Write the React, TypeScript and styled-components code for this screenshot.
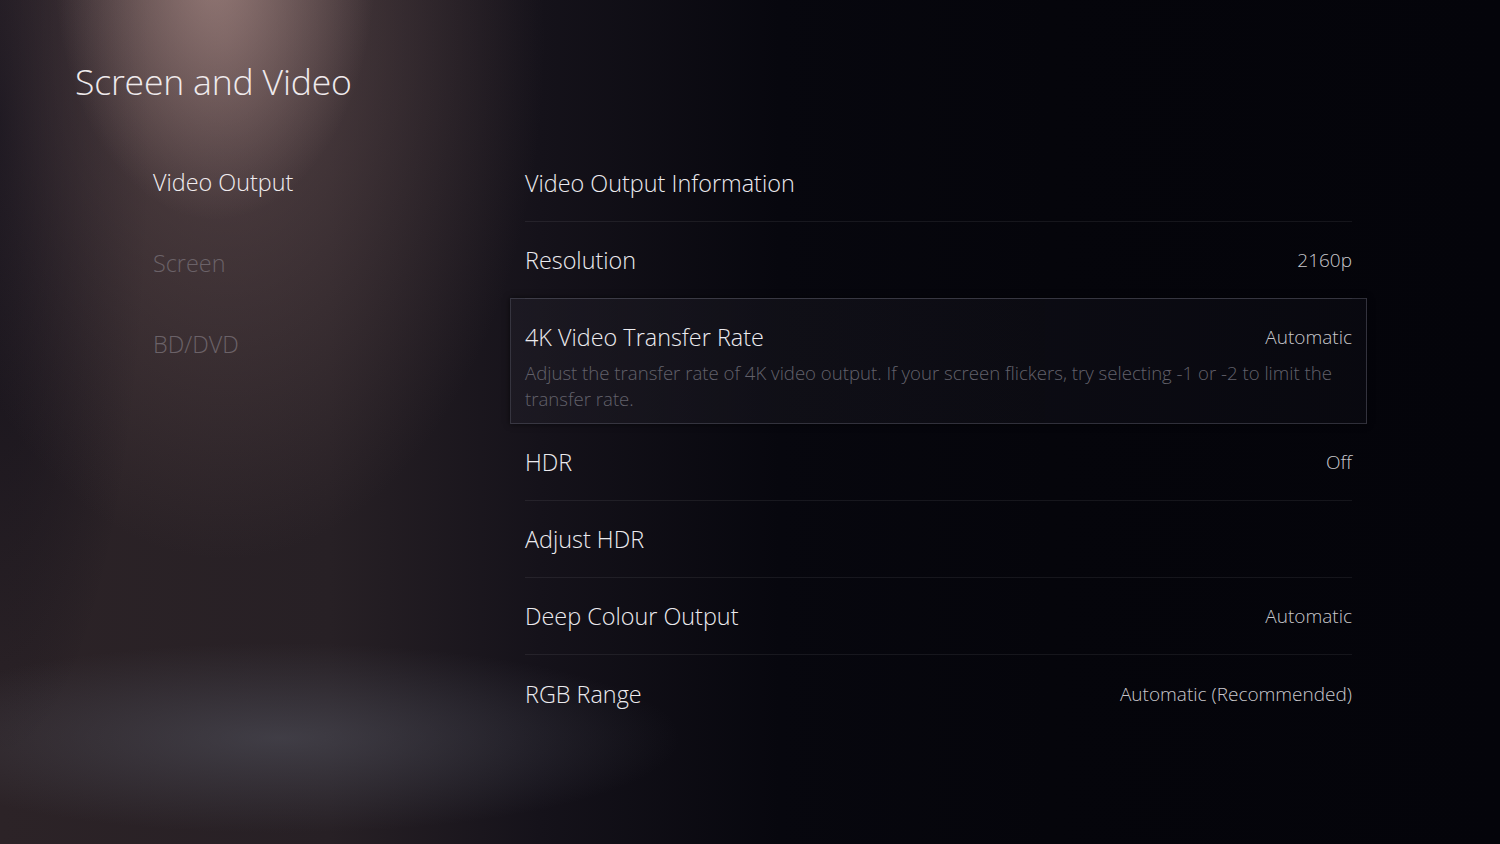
import styled, { createGlobalStyle } from "styled-components";

const GlobalStyle = createGlobalStyle`
  html, body {
    margin: 0;
    padding: 0;
    background: #05050b;
  }
  * {
    box-sizing: border-box;
  }
`;

type Setting = {
  label: string;
  value?: string;
  description?: string;
  selected?: boolean;
};

const navItems = [
  { label: "Video Output", active: true },
  { label: "Screen", active: false },
  { label: "BD/DVD", active: false },
];

const settings: Setting[] = [
  { label: "Video Output Information" },
  { label: "Resolution", value: "2160p" },
  {
    label: "4K Video Transfer Rate",
    value: "Automatic",
    description:
      "Adjust the transfer rate of 4K video output. If your screen flickers, try selecting -1 or -2 to limit the transfer rate.",
    selected: true,
  },
  { label: "HDR", value: "Off" },
  { label: "Adjust HDR" },
  { label: "Deep Colour Output", value: "Automatic" },
  { label: "RGB Range", value: "Automatic (Recommended)" },
];

function App() {
  return (
    <Page>
      <GlobalStyle />
      <Title>Screen and Video</Title>
      <Body>
        <Nav>
          {navItems.map((item) => (
            <NavItem key={item.label} $active={item.active}>
              {item.label}
            </NavItem>
          ))}
        </Nav>
        <List>
          {settings.map((s) => (
            <Row key={s.label} $selected={s.selected}>
              <RowHead>
                <Label>{s.label}</Label>
                {s.value && <Value>{s.value}</Value>}
              </RowHead>
              {s.description && <Description>{s.description}</Description>}
            </Row>
          ))}
        </List>
      </Body>
    </Page>
  );
}

export default App;

const Page = styled.div`
  position: relative;
  width: 1500px;
  height: 844px;
  overflow: hidden;
  font-family: "Open Sans", "Noto Sans", sans-serif;
  color: #ecebee;
  background:
    radial-gradient(ellipse 160px 250px at 215px -30px, rgba(200, 165, 158, 0.55), rgba(200, 165, 158, 0) 100%),
    radial-gradient(ellipse 320px 520px at 225px 40px, rgba(125, 98, 98, 0.5), rgba(125, 98, 98, 0) 100%),
    radial-gradient(ellipse 400px 95px at 280px 738px, rgba(88, 90, 102, 0.5), rgba(88, 90, 102, 0) 100%),
    radial-gradient(ellipse 150px 640px at 0px 120px, rgba(8, 8, 20, 0.75), rgba(8, 8, 20, 0) 100%),
    linear-gradient(90deg, #2c2327 0%, #272025 22%, #15121a 36%, #07070e 52%, #05050b 70%, #04040a 100%);
`;

const Title = styled.h1`
  margin: 0;
  padding: 60px 0 0 75px;
  font-size: 35.6px;
  line-height: 42px;
  font-weight: 300;
  color: #efeaec;
  letter-spacing: -0.2px;
`;

const Body = styled.div`
  display: grid;
  grid-template-columns: 372px 827px;
  padding: 43px 0 0 153px;
`;

const Nav = styled.div`
  display: flex;
  flex-direction: column;
  padding-top: 21px;
`;

const NavItem = styled.div<{ $active: boolean }>`
  height: 81px;
  font-size: 23.4px;
  line-height: 32px;
  font-weight: 300;
  color: ${(p) => (p.$active ? "#f1edef" : "#6b6268")};
`;

const List = styled.div`
  display: flex;
  flex-direction: column;
`;

const Row = styled.div<{ $selected?: boolean }>`
  display: flex;
  flex-direction: column;
  justify-content: center;
  min-height: 77px;
  border-bottom: 1px solid rgba(255, 255, 255, 0.07);

  &:last-child {
    border-bottom: none;
  }

  ${(p) =>
    p.$selected &&
    `
    margin: -1px -15px 0 -15px;
    padding: 22px 14px 9px 14px;
    min-height: 126px;
    justify-content: flex-start;
    border: 1px solid rgba(85, 85, 100, 0.5);
    background: linear-gradient(90deg, rgba(38, 36, 46, 0.35), rgba(18, 18, 26, 0.3));
    box-shadow: 0 0 6px rgba(0, 0, 0, 0.6);
  `}
`;

const RowHead = styled.div`
  display: flex;
  align-items: center;
  justify-content: space-between;
`;

const Label = styled.div`
  font-size: 23.4px;
  line-height: 32px;
  font-weight: 300;
  color: #ecebef;
`;

const Value = styled.div`
  font-size: 19px;
  line-height: 28px;
  font-weight: 300;
  color: #c9c8cd;
`;

const Description = styled.div`
  margin-top: 7px;
  font-size: 18.6px;
  line-height: 26px;
  font-weight: 300;
  color: #62616b;
`;
